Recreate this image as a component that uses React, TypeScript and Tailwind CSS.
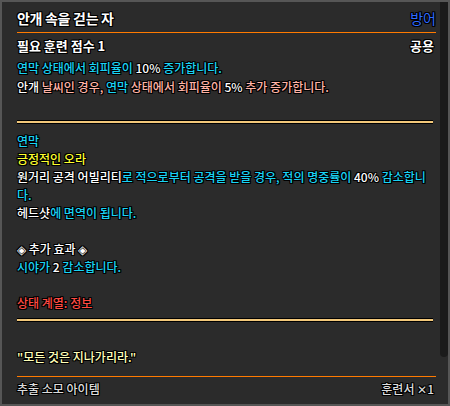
const outline =
  "[text-shadow:1px_1px_0_#000,-1px_-1px_0_#000,1px_-1px_0_#000,-1px_1px_0_#000,0_1px_0_#000,0_-1px_0_#000,1px_0_0_#000,-1px_0_0_#000]";

const cyan = "text-[#1ad3f5]";
const pink = "text-[#ffb3a6]";
const white = "text-white";

function GoldLine({ className = "" }: { className?: string }) {
  return (
    <div className={`mr-[3px] h-[4px] border-y border-black bg-[#f2c87a] ${className}`} />
  );
}

export default function App() {
  return (
    <div
      className={`flex h-[406px] w-[450px] border-2 border-[#565656] bg-[#2b2b2b] font-['Noto_Sans_CJK_KR','Noto_Sans',sans-serif] ${outline}`}
    >
      <div className="flex-1 pl-[15px] pr-[4px]">
        {/* header */}
        <div className="mt-[6px] flex h-[20px] items-center justify-between leading-[20px]">
          <span className="text-[14px] font-bold tracking-[-0.3px] text-white">안개 속을 걷는 자</span>
          <span className="text-[14px] text-[#2f6bff]">방어</span>
        </div>
        <div className="mt-[4px] h-px bg-[#ff7a00]" />
        <div className="mt-[4px] flex h-[18px] items-center justify-between leading-[18px] text-[13px] font-bold text-white">
          <span>필요 훈련 점수 1</span>
          <span className="mr-[2px]">공용</span>
        </div>

        {/* effect */}
        <div className="mt-[3px] text-[12px] font-medium leading-[19px]">
          <p className={cyan}>
            연막 상태에서 회피율이 <span className={white}>10%</span> 증가합니다.
          </p>
          <p className={pink}>
            <span className={white}>안개</span> 날씨인 경우, <span className={cyan}>연막</span> 상태에서 회피율이{" "}
            <span className={white}>5%</span> 추가 증가합니다.
          </p>
        </div>

        <GoldLine className="mt-[24px]" />

        {/* status */}
        <div className="mt-[8px] text-[12px] font-medium leading-[18px]">
          <p className={cyan}>연막</p>
          <p className="text-[#ffff2e]">긍정적인 오라</p>
          <p className={`${cyan} whitespace-nowrap`}>
            <span className={white}>원거리 공격 어빌리티</span>로 적으로부터 공격을 받을 경우, 적의 명중률이{" "}
            <span className={white}>40%</span> 감소합니
          </p>
          <p className={cyan}>다.</p>
          <p className={cyan}>
            <span className={white}>헤드샷</span>에 면역이 됩니다.
          </p>
          <p className="h-[18px]" />
          <p className={white}>◈ 추가 효과 ◈</p>
          <p className={cyan}>
            시야가 <span className={white}>2</span> 감소합니다.
          </p>
          <p className="h-[18px]" />
          <p className="text-[#ff4a42]">상태 계열: 정보</p>
        </div>

        <GoldLine className="mt-[6px]" />

        <p className="mt-[26px] text-[12px] font-medium leading-[18px] text-[#ffffb8]">
          "모든 것은 지나가리라."
        </p>

        <div className="mt-[10px] h-px bg-[#ff7a00]" />
        <div className="mt-[3px] flex justify-between text-[12px] font-medium leading-[18px] text-[#dcdcdc]">
          <span>추출 소모 아이템</span>
          <span className="mr-[2px]">훈련서 ✕1</span>
        </div>
      </div>

      {/* scrollbar */}
      <div className="w-[8px]">
        <div className="h-[355px] rounded-b-[5px] bg-[#1b1b1b]" />
      </div>
    </div>
  );
}
